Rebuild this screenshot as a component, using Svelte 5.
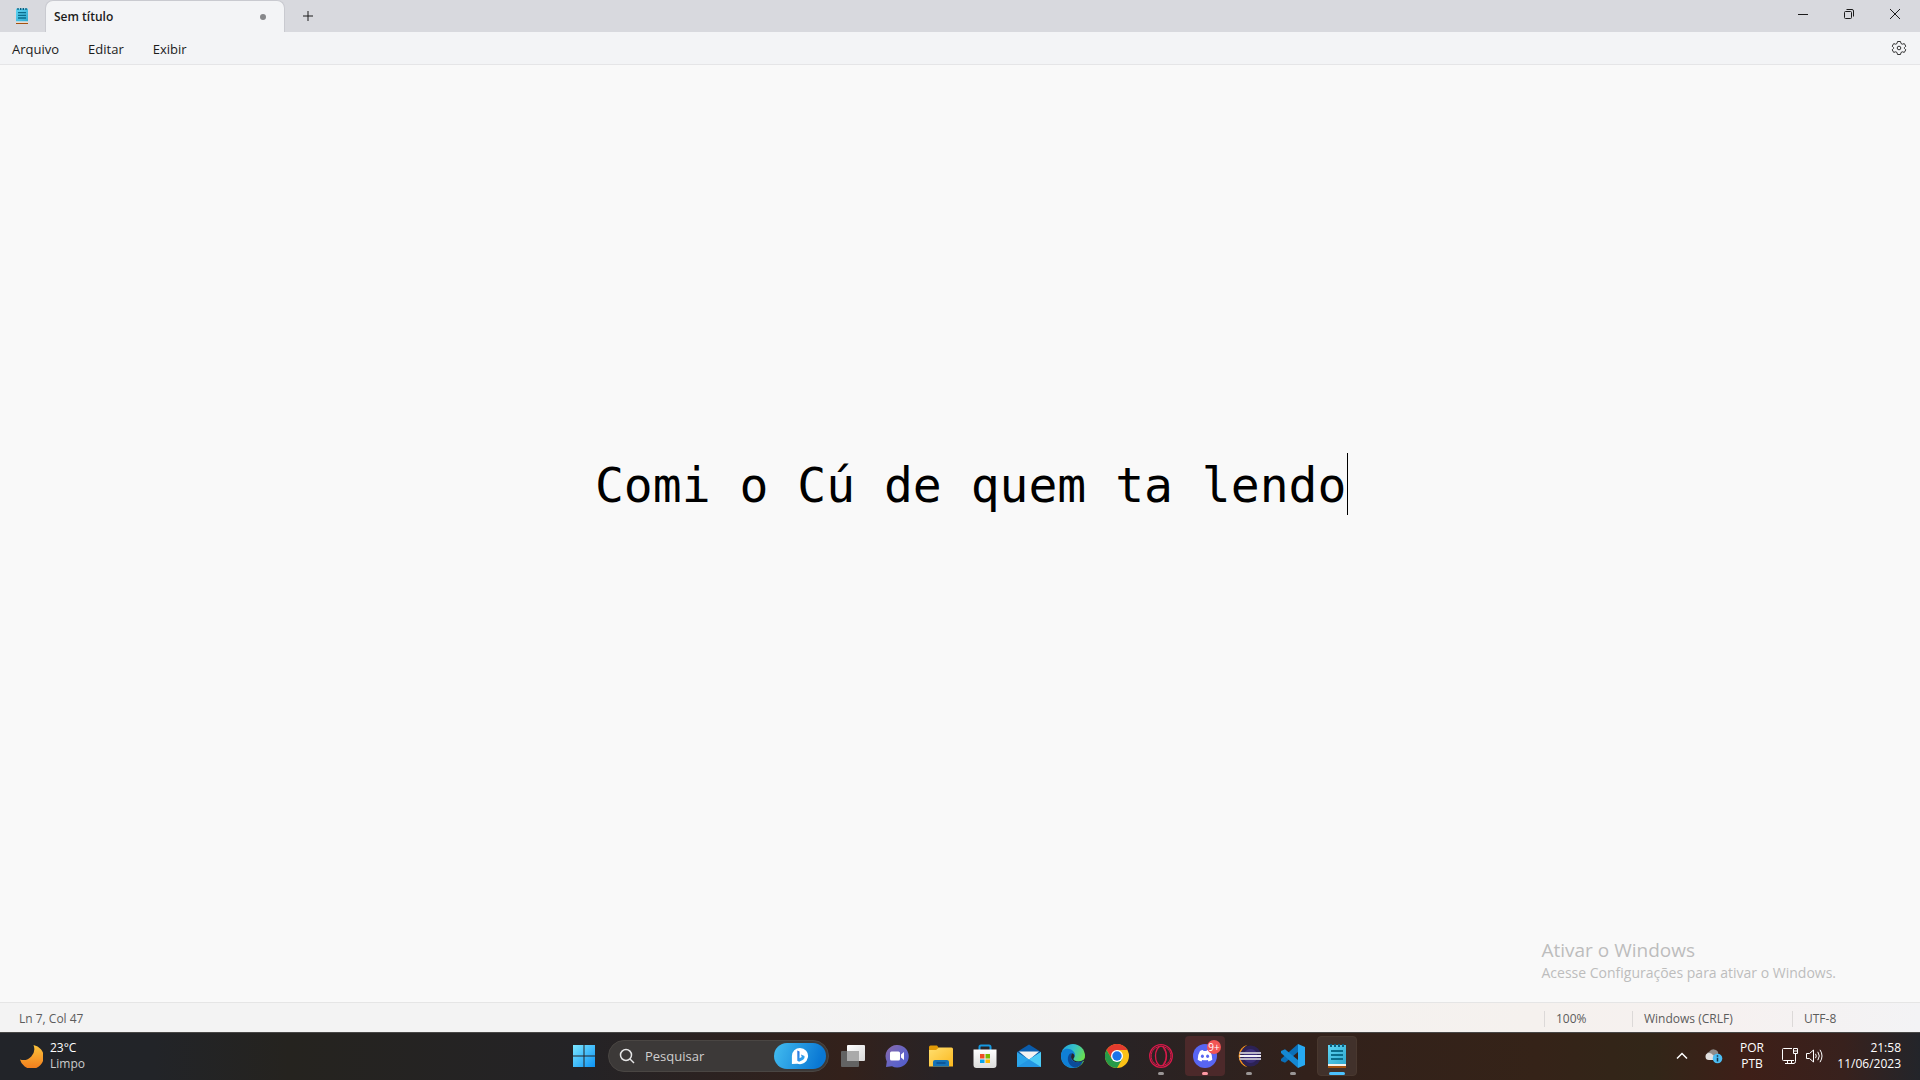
<script>
  const indent = ' '.repeat(20);
  let text = $state('\n'.repeat(6) + indent + 'Comi o Cú de quem ta lendo');

  const menus = ['Arquivo', 'Editar', 'Exibir'];

  const apps = [
    { id: 'taskview', label: 'Visão de tarefas' },
    { id: 'chat', label: 'Chat' },
    { id: 'explorer', label: 'Explorador de Arquivos' },
    { id: 'store', label: 'Microsoft Store' },
    { id: 'mail', label: 'Email' },
    { id: 'edge', label: 'Microsoft Edge' },
    { id: 'chrome', label: 'Google Chrome' },
    { id: 'opera', label: 'Opera GX', state: 'running' },
    { id: 'discord', label: 'Discord', state: 'attention', badge: '9+' },
    { id: 'eclipse', label: 'Eclipse', state: 'running' },
    { id: 'vscode', label: 'Visual Studio Code', state: 'running' },
    { id: 'notepad', label: 'Bloco de Notas', state: 'active' }
  ];
</script>

{#snippet notepadIcon()}
  <svg viewBox="0 0 24 24" aria-hidden="true">
    <path d="M3 22h18v2H3z" fill="#a3510f" />
    <path d="M3 20h18v2H3z" fill="#f4f0ea" />
    <path d="M3 1h18v19H3z" fill="url(#np)" />
    <path d="M5 0h2v3H5zM9 0h2v3H9zM13 0h2v3h-2zM17 0h2v3h-2z" fill="#0b5f80" />
    <path d="M6 7h12M6 11h12M6 15h12" stroke="#0a6d8c" stroke-width="2" />
  </svg>
{/snippet}

{#snippet appIcon(id)}
  {#if id === 'notepad'}
    {@render notepadIcon()}
  {:else}
    <svg viewBox="0 0 24 24" aria-hidden="true">
      {#if id === 'taskview'}
        <rect x="6" y="1" width="18" height="16" rx="1" fill="url(#tv)" />
        <rect x="0" y="7" width="18" height="16" rx="1" fill="#636363" />
        <path d="M6 7h12v10H6z" fill="#aaa" />
      {:else if id === 'chat'}
        <path d="M12 1a11.300 11.300 0 1 1-5 21.200L1 23l.8-5.500A11.300 11.300 0 0 1 12 1z" fill="url(#ct)" />
        <rect x="5" y="7.500" width="10" height="9" rx="1.500" fill="#fff" />
        <path d="M16 10.500l3-2.500v8l-3-2.500z" fill="#fff" />
      {:else if id === 'explorer'}
        <path d="M0 3a1.500 1.500 0 0 1 1.500-1.500H8L10 4v4H0z" fill="#e19a06" />
        <path d="M0 6h7l3-2.500h12.500A1.500 1.500 0 0 1 24 5v17.500H0z" fill="url(#fd)" />
        <path d="M4 22.500V18a2 2 0 0 1 2-2h12a2 2 0 0 1 2 2v4.500z" fill="#1573b8" />
        <path d="M8 19h8" stroke="#0b4f8f" stroke-width="1.500" stroke-linecap="round" />
      {:else if id === 'store'}
        <path d="M6.500 6V3q0-1.500 1.500-1.500h8q1.500 0 1.500 1.500v3" fill="none" stroke="#1598e0" stroke-width="2" />
        <path d="M.5 5.500h23V21a3 3 0 0 1-3 3h-17a3 3 0 0 1-3-3z" fill="url(#st)" />
        <path d="M7 10h4.500v4.500H7z" fill="#f04e24" />
        <path d="M12.500 10H17v4.500h-4.500z" fill="#7cb900" />
        <path d="M7 15.500h4.500V19H7z" fill="#06a4ee" />
        <path d="M12.500 15.500H17V19h-4.500z" fill="#feb700" />
      {:else if id === 'mail'}
        <path d="M0 8l12-7.500L24 8l-12 8z" fill="#0a5cab" />
        <path d="M2 7.500h20L12 16z" fill="#f3f3f3" />
        <path d="M0 8l12 7.500L24 8v15H0z" fill="#2ba5ea" />
        <path d="M12 15.500L24 8v15z" fill="#4ccbf6" />
        <path d="M12 15.500L24 23H0z" fill="#1e8bdc" opacity=".6" />
      {:else if id === 'edge'}
        <circle cx="12" cy="12" r="12" fill="url(#ed1)" />
        <path d="M0 11C1 3 9 4 12 7c3 2.500 2 6 .5 7.500-1 1 .5 3 4 3 3 0 5-1 6-2C21 20 17 24 12 24 5 24 0 19 0 12z" fill="#0f7fd6" />
        <path d="M8.500 10C5 14 7 22 14 23.800c4-.6 7-3.500 8-6.800-6 3-12 1-12-4 0-1.300.8-2.500 1.500-3.500-1-.5-2-.2-3 .5z" fill="#0c4b99" />
        <path d="M11.500 9.300c-2 2.300-2 5.200.3 7.200 3 2.700 7.500 2.200 10.500.2l1.700 1.500V14c-1.500 3.500-7 4.500-10.500 2.500-1.500-1-1.300-1.700-.8-2.300 1.300-1.500 1-3.700-1.200-4.900z" fill="#29232a" />
      {:else if id === 'chrome'}
        <circle cx="12" cy="12" r="12" fill="#fbc116" />
        <path d="M1.600 6a12 12 0 0 1 20.800 0H12l-5 9z" fill="#e33b2e" />
        <path d="M1.600 6a12 12 0 0 0 10.400 18l5.200-9H6.800z" fill="#269a48" />
        <circle cx="12" cy="12" r="6" fill="#fff" />
        <circle cx="12" cy="12" r="4.700" fill="#1a73e8" />
      {:else if id === 'opera'}
        <g fill="none" stroke="#d8194a" stroke-width="1.300">
          <circle cx="12" cy="12" r="11.300" />
          <path d="M10 2.500C-.5 5-.5 19 10 21.500M14 2.500c10.500 2.500 10.500 16.500 0 19" stroke-width="1" />
          <ellipse cx="12" cy="12" rx="5.500" ry="9.800" />
          <path d="M14.500 4.500c3.500 4 3.500 11 0 15" stroke-width="1" />
        </g>
      {:else if id === 'discord'}
        <circle cx="12" cy="12" r="12" fill="#5865f2" />
        <path d="M7 6.900q1.500-.7 3-.9l.5 1h3l.5-1q1.500.2 3 .9 2.500 4 2.300 8.800-1.700 1.300-3.700 1.800l-.9-1.500q-2.700.7-5.400 0l-.9 1.500q-2-.5-3.700-1.800Q4.500 10.900 7 6.900z" fill="#fff" />
        <ellipse cx="9.400" cy="12.300" rx="1.500" ry="1.700" fill="#5865f2" />
        <ellipse cx="14.600" cy="12.300" rx="1.500" ry="1.700" fill="#5865f2" />
      {:else if id === 'eclipse'}
        <path d="M10.500.8a11.500 11.500 0 0 0 0 22.400 13 13 0 0 1 0-22.400z" fill="#f4921e" />
        <circle cx="13.500" cy="12" r="10.500" fill="#2c2255" />
        <circle cx="13.500" cy="12" r="7" fill="#3b2f78" />
        <path d="M2.500 9h21.500M2.500 15h21.500" stroke="#b9b6c6" stroke-width="2" />
        <path d="M2.500 12h21.500" stroke="#f4f3f8" stroke-width="2" />
      {:else if id === 'vscode'}
        <path d="M17 0v8L4 18.700 0 17v-2z" fill="#0b6fb8" />
        <path d="M17 24v-8L4 5.300 0 7v2z" fill="#1588d3" />
        <path d="M17 0l7 3v18l-7 3z" fill="#27a9f2" />
      {/if}
    </svg>
  {/if}
{/snippet}

<svg class="defs" aria-hidden="true">
  <defs>
    <linearGradient id="np" x1="0" y1="0" x2="1" y2="1"><stop stop-color="#5fd5f4" /><stop offset="1" stop-color="#2fa9cf" /></linearGradient>
    <linearGradient id="tv" x1="0" y1="0" x2="1" y2="1"><stop stop-color="#fff" /><stop offset="1" stop-color="#d8d8d8" /></linearGradient>
    <linearGradient id="ct" x1="0" y1="0" x2="1" y2="1"><stop stop-color="#8a68a8" /><stop offset=".6" stop-color="#6064c8" /><stop offset="1" stop-color="#5059c9" /></linearGradient>
    <linearGradient id="fd" x1="0" y1="0" x2="1" y2="1"><stop stop-color="#ffdf70" /><stop offset="1" stop-color="#fcb81e" /></linearGradient>
    <linearGradient id="st" x1="0" y1="0" x2="0" y2="1"><stop stop-color="#fff" /><stop offset="1" stop-color="#dcdcdc" /></linearGradient>
    <linearGradient id="ed1" x1="0" y1="0" x2="1" y2=".5"><stop stop-color="#1d9fe0" /><stop offset=".5" stop-color="#35c1c9" /><stop offset="1" stop-color="#6be04a" /></linearGradient>
    <linearGradient id="win" x1="0" y1="0" x2="1" y2="1"><stop stop-color="#7be6ff" /><stop offset="1" stop-color="#0c93f4" /></linearGradient>
    <linearGradient id="moon" x1="0" y1="0" x2="0" y2="1"><stop stop-color="#fcc43c" /><stop offset="1" stop-color="#f27c1c" /></linearGradient>
    <linearGradient id="bb" x1="0" y1="0" x2="1" y2="1"><stop stop-color="#2a6fe0" /><stop offset="1" stop-color="#35b8f0" /></linearGradient>
  </defs>
</svg>

<div class="desktop">
  <header class="titlebar">
    <span class="app-icon">{@render notepadIcon()}</span>
    <div class="tab">
      <span>Sem título</span>
      <i class="dot"></i>
    </div>
    <button class="new-tab" aria-label="Nova guia">
      <svg viewBox="0 0 12 12"><path d="M6 1v10M1 6h10" /></svg>
    </button>
    <div class="window-buttons">
      <button aria-label="Minimizar"><svg viewBox="0 0 12 12"><path d="M1 6.500h10" /></svg></button>
      <button aria-label="Restaurar"><svg viewBox="0 0 12 12"><rect x="1.500" y="3.500" width="7" height="7" rx="1" /><path d="M3.500 1.500H9q1.500 0 1.500 1.500v5.500" /></svg></button>
      <button aria-label="Fechar"><svg viewBox="0 0 12 12"><path d="M1 1l10 10M11 1L1 11" /></svg></button>
    </div>
  </header>

  <nav class="menubar">
    {#each menus as menu}
      <button>{menu}</button>
    {/each}
    <button class="settings" aria-label="Configurações">
      <svg viewBox="0 0 16 16">
        <path d="M6.500 1.500h3l.5 2 1.300.7 2-.6 1.500 2.600L13.400 7.600v.8l1.400 1.400-1.500 2.600-2-.6-1.300.7-.5 2h-3l-.5-2-1.300-.7-2 .6-1.500-2.600 1.400-1.400v-.8L1.200 6.200l1.500-2.600 2 .6L6 3.500z" />
        <circle cx="8" cy="8" r="1.800" />
      </svg>
    </button>
  </nav>

  <main class="editor">
    <textarea aria-label="Texto" spellcheck="false" bind:value={text}></textarea>
    <i class="caret"></i>
    <div class="watermark">
      <p class="watermark-title">Ativar o Windows</p>
      <p>Acesse Configurações para ativar o Windows.</p>
    </div>
  </main>

  <footer class="status">
    <span class="position">Ln 7, Col 47</span>
    <span class="cell zoom">100%</span>
    <span class="cell eol">Windows (CRLF)</span>
    <span class="cell encoding">UTF-8</span>
  </footer>

  <div class="taskbar">
    <button class="weather">
      <svg viewBox="0 0 24 24" aria-hidden="true"><path d="M14.500 1A12 12 0 1 1 1 15.500 11 11 0 0 0 14.500 1z" fill="url(#moon)" /></svg>
      <span class="stack"><span>23°C</span><span class="dim">Limpo</span></span>
    </button>

    <div class="apps">
      <button class="app start" aria-label="Iniciar">
        <svg viewBox="0 0 24 24"><path d="M1 1h10.500v10.500H1zM12.500 1H23v10.500H12.500zM1 12.500h10.500V23H1zM12.500 12.500H23V23H12.500z" fill="url(#win)" /></svg>
      </button>
      <label class="search">
        <svg class="glass" viewBox="0 0 16 16" aria-hidden="true"><circle cx="7" cy="7" r="5.500" /><path d="M11 11l4 4" /></svg>
        <input type="text" placeholder="Pesquisar" aria-label="Pesquisar" />
        <span class="bing">
          <svg viewBox="0 0 20 20" aria-hidden="true">
            <path d="M10 1a9 9 0 1 1-3 17.500L1 19V10A9 9 0 0 1 10 1z" fill="#fff" />
            <path d="M7 4l2.500 1v7.500L12 11l-1-2.700 4 1.700q.8 3-1.500 4.300L9 16.500l-2-1.300z" fill="url(#bb)" />
          </svg>
        </span>
      </label>
      {#each apps as app}
        <button class={['app', app.state]} aria-label={app.label}>
          {@render appIcon(app.id)}
          {#if app.badge}<span class="badge">{app.badge}</span>{/if}
        </button>
      {/each}
    </div>

    <div class="tray">
      <button class="chevron" aria-label="Mostrar ícones ocultos"><svg viewBox="0 0 12 12"><path d="M1 8.500l5-5 5 5" /></svg></button>
      <button class="cloud" aria-label="OneDrive">
        <svg viewBox="0 0 18 16">
          <path d="M4 11a4 4 0 0 1 .5-7.500A5 5 0 0 1 13 4l1 7z" fill="#8f8b89" />
          <path d="M4 12a3.500 3.500 0 0 1 0-7q2-.3 4 2l4 4v1z" fill="#e2e0df" />
          <circle cx="12.500" cy="10.500" r="4.800" fill="#4cbdf3" />
          <path d="M12.500 7.300v1.500M12.500 9.800v3.700" stroke="#14354a" stroke-width="1.500" />
        </svg>
      </button>
      <button class="language stack"><span>POR</span><span>PTB</span></button>
      <button class="system" aria-label="Rede e volume">
        <svg viewBox="0 0 18 18"><path d="M11 1.500H2.500q-1 0-1 1v10q0 1 1 1H13M4 16.500h9M6.500 13.500v3M10.500 13.500v3M12.500 1.500h4v5h-4zM14.500 6.500v8q0 2-2 2M12.500 4h4" /></svg>
        <svg viewBox="0 0 18 18"><path d="M1.500 6.500h3L8.500 3v12l-4-3.500h-3zM10.500 6.800q1.500 2.200 0 4.400M12.800 4.800q3 4.200 0 8.400M15 2.800q4 6.200 0 12.400" /></svg>
      </button>
      <button class="clock stack"><span>21:58</span><span>11/06/2023</span></button>
    </div>
  </div>
</div>

<style>
  :global(body) {
    margin: 0;
  }

  .defs {
    position: absolute;
    width: 0;
    height: 0;
  }

  .desktop {
    display: grid;
    grid-template-rows: 32px 33px 1fr 30px 48px;
    height: 100vh;
    overflow: hidden;
    font: 13px/16px 'Open Sans', 'Noto Sans', sans-serif;
    color: #1b1b1b;
    background: #f9f9f9;
  }

  button,
  input {
    margin: 0;
    padding: 0;
    border: 0;
    background: none;
    font: inherit;
    color: inherit;
  }

  svg {
    display: block;
  }

  p {
    margin: 0;
  }

  .titlebar {
    display: flex;
    background: #d8d9de;
  }

  .app-icon {
    width: 16px;
    padding: 8px 15px 0 14px;
  }

  .app-icon svg {
    width: 16px;
    height: 16px;
  }

  .tab {
    box-sizing: border-box;
    display: flex;
    align-items: center;
    justify-content: space-between;
    width: 240px;
    padding: 0 18px 0 8px;
    border: 1px solid #c9cad0;
    border-bottom: 0;
    border-radius: 8px 8px 0 0;
    background: #f3f4f6;
    font-size: 12px;
    font-weight: 600;
  }

  .dot {
    width: 6px;
    height: 6px;
    border-radius: 50%;
    background: #86878a;
  }

  .new-tab {
    width: 46px;
    display: grid;
    place-items: center;
  }

  .new-tab svg,
  .window-buttons svg {
    width: 12px;
    height: 12px;
    fill: none;
    stroke: #1b1b1b;
  }

  .window-buttons {
    display: flex;
    margin-left: auto;
    padding-right: 2px;
  }

  .window-buttons button {
    display: grid;
    place-items: center;
    width: 46px;
    height: 28px;
  }

  .menubar {
    display: flex;
    gap: 29px;
    padding: 0 13px 0 12px;
    border-bottom: 1px solid #e5e5e7;
    background: #f3f4f6;
  }

  .menubar button {
    padding-top: 1px;
  }

  .menubar .settings {
    margin-left: auto;
    padding: 0;
  }

  .settings svg {
    width: 16px;
    height: 16px;
    fill: none;
    stroke: #333;
    stroke-linejoin: round;
  }

  .editor {
    position: relative;
    font: 48px/62px 'DejaVu Sans Mono', monospace;
  }

  textarea {
    box-sizing: border-box;
    display: block;
    width: 100%;
    height: 100%;
    padding: 17px;
    border: 0;
    outline: 0;
    resize: none;
    background: transparent;
    color: #000;
    font: inherit;
    white-space: pre;
    overflow: hidden;
  }

  .caret {
    position: absolute;
    left: calc(18px + 46ch);
    top: calc(16px + 6lh);
    width: 1px;
    height: 1lh;
    background: #000;
  }

  .watermark {
    position: absolute;
    right: 84px;
    bottom: 19px;
    font: 14px/20px 'Open Sans', 'Noto Sans', sans-serif;
    color: #bdbdbd;
  }

  .watermark-title {
    font-size: 19px;
    line-height: 26px;
  }

  .status {
    display: flex;
    align-items: center;
    padding: 3px 0 0 19px;
    border-top: 1px solid #e5e5e5;
    background: linear-gradient(90deg, #f3f3f3 0 40%, #f5f1ee 80%, #f6f1f0 90%, #f3f3f5);
    box-sizing: border-box;
    font-size: 12px;
    color: #5c5c5c;
  }

  .position {
    flex: 1;
  }

  .cell {
    box-sizing: border-box;
    padding-left: 11px;
    border-left: 1px solid #dcd9d8;
  }

  .zoom {
    width: 88px;
  }

  .eol {
    width: 160px;
  }

  .encoding {
    width: 128px;
  }

  .taskbar {
    box-sizing: border-box;
    display: grid;
    grid-template-columns: 1fr auto 1fr;
    align-items: center;
    padding-bottom: 1px;
    border-top: 1px solid #484746;
    background: linear-gradient(90deg, #222429 0, #222428 8%, #25231f 15%, #242326 30%, #33211b 44%, #282326 49%, #282325 58%, #32211b 68%, #352318 80%, #322618 86%, #3e1f18 91%, #38211d 96%, #23252a 100%);
    color: #fff;
    font-size: 12px;
  }

  .stack {
    display: flex;
    flex-direction: column;
  }

  .weather {
    display: flex;
    align-items: center;
    gap: 7px;
    margin-left: 19px;
    text-align: left;
  }

  .weather svg {
    width: 24px;
    height: 24px;
  }

  .dim {
    color: #ccc;
  }

  .apps {
    display: flex;
    align-items: center;
    gap: 4px;
    padding-left: 1px;
  }

  .app {
    box-sizing: border-box;
    position: relative;
    display: grid;
    place-items: center;
    width: 40px;
    height: 40px;
    border: 1px solid transparent;
    border-radius: 4px;
  }

  .app > :global(svg) {
    width: 24px;
    height: 24px;
  }

  .running::after,
  .attention::after,
  .active::after {
    content: '';
    position: absolute;
    bottom: 0;
    left: calc(50% - 3px);
    width: 6px;
    height: 3px;
    border-radius: 2px;
    background: #9a9696;
  }

  .attention {
    background: #4c292a;
  }

  .attention::after {
    background: #ff99a4;
  }

  .active {
    border-color: #49382f;
    background: #41312b;
  }

  .active::after {
    left: calc(50% - 8px);
    width: 16px;
    background: #4cc2ff;
  }

  .badge {
    position: absolute;
    top: 3px;
    right: 3px;
    width: 14px;
    border-radius: 7px;
    background: #f25555;
    font-size: 10px;
    line-height: 14px;
    text-align: center;
  }

  .search {
    box-sizing: border-box;
    display: flex;
    align-items: center;
    gap: 10px;
    width: 221px;
    height: 32px;
    padding: 0 2px 0 10px;
    border: 1px solid #4a4643;
    border-radius: 16px;
    background: #3c3938;
    font-size: 13px;
  }

  .glass {
    width: 16px;
    height: 16px;
    fill: none;
    stroke: #e6e6e6;
    stroke-width: 1.5;
  }

  .search input {
    flex: 1;
    min-width: 0;
    outline: 0;
  }

  .search input::placeholder {
    color: #d0cfce;
    opacity: 1;
  }

  .bing {
    display: grid;
    place-items: center;
    width: 52px;
    height: 26px;
    border-radius: 13px;
    background: linear-gradient(110deg, #43bdf0, #0a78d4 85%);
  }

  .bing svg {
    width: 18px;
    height: 18px;
  }

  .tray {
    display: flex;
    align-items: center;
    justify-content: flex-end;
    padding-right: 19px;
  }

  .tray svg {
    fill: none;
    stroke: #fff;
  }

  .chevron svg {
    width: 12px;
    height: 12px;
    stroke-width: 1.5;
  }

  .cloud {
    margin: 0 17px 0 17px;
  }

  .cloud svg {
    width: 18px;
    height: 16px;
    stroke: none;
  }

  .language {
    width: 24px;
    align-items: center;
  }

  .system {
    display: flex;
    gap: 6px;
    margin-left: 17px;
  }

  .system svg {
    width: 18px;
    height: 18px;
  }

  .clock {
    align-items: flex-end;
    width: 78px;
  }
</style>
